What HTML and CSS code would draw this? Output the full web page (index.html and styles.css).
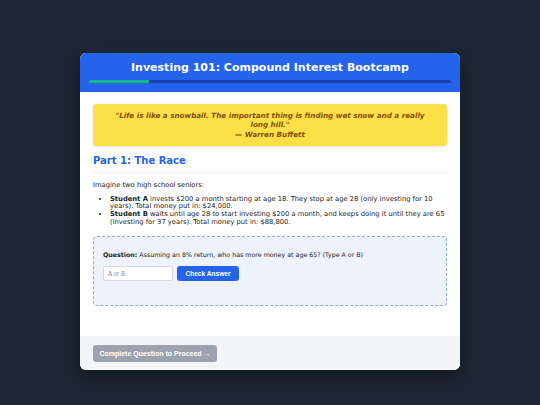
FILE: index.html
```html
<!DOCTYPE html>
<html lang="en">
<head>
<meta charset="utf-8">
<title>Investing 101</title>
<link rel="stylesheet" href="styles.css">
</head>
<body>
<div class="card">
  <header class="card-header">
    <h1 class="title">Investing 101: Compound Interest Bootcamp</h1>
    <div class="progress"><div class="progress-fill" style="width:16.6%"></div></div>
  </header>
  <main class="card-body">
    <blockquote class="quote">"Life is like a snowball. The important thing is finding wet snow and a really long hill."<br>— Warren Buffett</blockquote>
    <h2 class="section-title">Part 1: The Race</h2>
    <p class="intro">Imagine two high school seniors:</p>
    <ul class="list">
      <li><strong>Student A</strong> invests $200 a month starting at age 18. They stop at age 28 (only investing for 10 years). Total money put in: $24,000.</li>
      <li><strong>Student B</strong> waits until age 28 to start investing $200 a month, and keeps doing it until they are 65 (investing for 37 years). Total money put in: $88,800.</li>
    </ul>
    <div class="question-box">
      <p class="question"><strong>Question:</strong> Assuming an 8% return, who has more money at age 65? (Type A or B)</p>
      <div class="answer-row">
        <input class="answer-input" type="text" placeholder="A or B">
        <button class="btn-check" type="button">Check Answer</button>
      </div>
    </div>
  </main>
  <footer class="card-footer">
    <button class="btn-next" type="button" disabled>Complete Question to Proceed →</button>
  </footer>
</div>
</body>
</html>
```
FILE: styles.css
```css
html, body {
  margin: 0;
  padding: 0;
}
body {
  background: #1e2633;
  font-family: "DejaVu Sans", Verdana, sans-serif;
  padding-top: 53px;
  height: 405px;
  box-sizing: border-box;
}
.card {
  width: 380px;
  margin: 0 auto;
  background: #ffffff;
  border-radius: 6px;
  overflow: hidden;
  box-shadow: 0 6px 16px rgba(0, 0, 0, 0.35);
}
.card-header {
  background: #2563eb;
  height: 39px;
  box-sizing: border-box;
  padding: 8px 9px 0;
}
.title {
  margin: 0;
  color: #ffffff;
  font-size: 11px;
  line-height: 14px;
  text-align: center;
  font-weight: bold;
}
.progress {
  margin-top: 5px;
  height: 3px;
  background: #1e40af;
  border-radius: 2px;
  overflow: hidden;
}
.progress-fill {
  height: 100%;
  background: #10b981;
}
.card-body {
  padding: 12px 13px 30px;
  display: block;
}
.quote {
  margin: 0;
  background: #fde047;
  color: #854d0e;
  font-style: italic;
  font-weight: bold;
  font-size: 7.2px;
  line-height: 9.5px;
  text-align: center;
  padding: 6.5px 18px 6.5px;
  border-radius: 4px;
  box-shadow: 0 1px 3px rgba(0, 0, 0, 0.12);
}
.section-title {
  margin: 8px 0 0;
  color: #2563eb;
  font-size: 10px;
  line-height: 14px;
  padding-bottom: 4px;
  border-bottom: 1px solid #eeeeee;
}
.intro {
  margin: 8px 0 0;
  font-size: 6.75px;
  line-height: 8px;
  color: #222;
}
.list {
  margin: 7px 0 0;
  padding-left: 17px;
  font-size: 6.75px;
  line-height: 7.9px;
  color: #222;
}
.question-box {
  margin-top: 9px;
  background: #edf2fd;
  border: 1px dashed #8fa9e6;
  border-radius: 4px;
  padding: 14px 9px 24px;
}
.question {
  margin: 0;
  font-size: 6.3px;
  line-height: 8px;
  color: #222;
}
.answer-row {
  display: flex;
  gap: 4px;
  margin-top: 7px;
}
.answer-input {
  width: 70px;
  height: 15px;
  box-sizing: border-box;
  border: 1px solid #d6d9de;
  border-radius: 2px;
  background: #fff;
  padding: 0 4px;
  font-family: "Liberation Sans", Arial, sans-serif;
  font-size: 6.3px;
  outline: none;
}
.answer-input::placeholder {
  color: #8a8f96;
}
.btn-check {
  height: 15px;
  width: 62px;
  border: none;
  border-radius: 3px;
  background: #2563eb;
  color: #fff;
  font-family: "Liberation Sans", Arial, sans-serif;
  font-weight: bold;
  font-size: 6.6px;
  padding: 0;
}
.card-footer {
  background: #f3f4f6;
  padding: 9px 13px 8px;
}
.btn-next {
  display: block;
  height: 17px;
  width: 124px;
  border: none;
  border-radius: 3px;
  background: #9ca3af;
  color: #fff;
  font-family: "Liberation Sans", Arial, sans-serif;
  font-weight: bold;
  font-size: 7px;
  padding: 0;
}
```
